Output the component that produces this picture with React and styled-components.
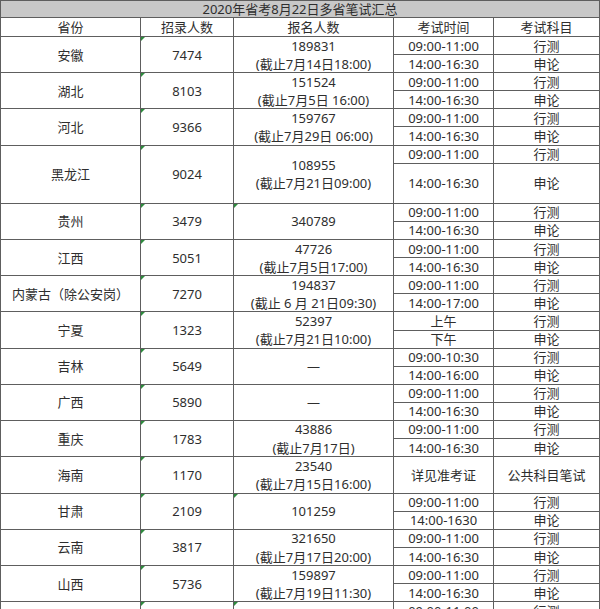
import React from "react";
import styled, { createGlobalStyle } from "styled-components";

const GlobalStyle = createGlobalStyle`
  html, body {
    margin: 0;
    padding: 0;
    background: #ffffff;
    height: 609px;
    overflow: hidden;
  }
  body {
    font-family: "Noto Sans", "Noto Sans CJK SC", sans-serif;
  }
`;

const provinces = [
  { name: "安徽", quota: "7474", reg: ["189831", "(截止7月14日18:00)"] },
  { name: "湖北", quota: "8103", reg: ["151524", "(截止7月5日 16:00)"] },
  { name: "河北", quota: "9366", reg: ["159767", "(截止7月29日 06:00)"] },
  { name: "黑龙江", quota: "9024", reg: ["108955", "(截止7月21日09:00)"], heights: [18.1, 40.2] },
  { name: "贵州", quota: "3479", reg: ["340789"], flag: true },
  { name: "江西", quota: "5051", reg: ["47726", "(截止7月5日17:00)"] },
  {
    name: "内蒙古（除公安岗）",
    quota: "7270",
    reg: ["194837", "(截止 6 月 21日09:30)"],
    slots: [
      ["09:00-11:00", "行测"],
      ["14:00-17:00", "申论"],
    ],
  },
  {
    name: "宁夏",
    quota: "1323",
    reg: ["52397", "(截止7月21日10:00)"],
    slots: [
      ["上午", "行测"],
      ["下午", "申论"],
    ],
  },
  {
    name: "吉林",
    quota: "5649",
    reg: ["—"],
    slots: [
      ["09:00-10:30", "行测"],
      ["14:00-16:00", "申论"],
    ],
  },
  { name: "广西", quota: "5890", reg: ["—"] },
  { name: "重庆", quota: "1783", reg: ["43886", "(截止7月17日)"] },
  {
    name: "海南",
    quota: "1170",
    reg: ["23540", "(截止7月15日16:00)"],
    slots: [["详见准考证", "公共科目笔试"]],
    heights: [36.6],
  },
  {
    name: "甘肃",
    quota: "2109",
    reg: ["101259"],
    flag: true,
    slots: [
      ["09:00-11:00", "行测"],
      ["14:00-1630", "申论"],
    ],
  },
  { name: "云南", quota: "3817", reg: ["321650", "(截止7月17日20:00)"] },
  { name: "山西", quota: "5736", reg: ["159897", "(截止7月19日11:30)"] },
  { name: "", quota: "", reg: [""], flag: true },
];

const defaultSlots = [
  ["09:00-11:00", "行测"],
  ["14:00-16:30", "申论"],
];

const Sheet = styled.div`
  display: grid;
  grid-template-columns: 140px 93px 160px 100px 106px;
  grid-template-rows: ${(p) => p.$rows};
  border-left: 1px solid #5e5e5e;
  border-top: 1px solid #5e5e5e;
  width: 600px;
  box-sizing: border-box;
  color: #2e2e2e;
  font-size: 13px;
`;

const Cell = styled.div`
  position: relative;
  box-sizing: border-box;
  border-right: 1px solid #5e5e5e;
  border-bottom: 1px solid #5e5e5e;
  grid-row: ${(p) => (p.$span > 1 ? `span ${p.$span}` : "auto")};
  display: flex;
  flex-direction: column;
  align-items: center;
  justify-content: center;
  line-height: 18.1px;
  white-space: nowrap;
  overflow: hidden;

  &::before {
    content: "";
    display: ${(p) => (p.$flag ? "block" : "none")};
    position: absolute;
    left: 0;
    top: 0;
    width: 0;
    height: 0;
    border-top: 4px solid #2e8b3e;
    border-right: 4px solid transparent;
  }
`;

const Title = styled(Cell)`
  grid-column: 1 / -1;
  background: #c8c8c8;
  line-height: 16px;
`;

const App = () => {
  const rowHeights = ["17px", "19px"];
  provinces.forEach((p) => {
    const slots = p.slots || defaultSlots;
    const heights = p.heights || slots.map(() => 18.1);
    heights.forEach((h) => rowHeights.push(`${h}px`));
  });

  return (
    <>
      <GlobalStyle />
      <Sheet $rows={rowHeights.join(" ")}>
        <Title>2020年省考8月22日多省笔试汇总</Title>
        <Cell>省份</Cell>
        <Cell>招录人数</Cell>
        <Cell>报名人数</Cell>
        <Cell>考试时间</Cell>
        <Cell>考试科目</Cell>
        {provinces.map((p, index) => {
          const slots = p.slots || defaultSlots;
          const span = slots.length;
          return (
            <React.Fragment key={index}>
              <Cell $span={span}>{p.name}</Cell>
              <Cell $span={span} $flag>
                {p.quota}
              </Cell>
              <Cell $span={span} $flag={p.flag}>
                {p.reg.map((line, i) => (
                  <span key={i}>{line}</span>
                ))}
              </Cell>
              {slots.map((s, i) => (
                <React.Fragment key={i}>
                  <Cell>{s[0]}</Cell>
                  <Cell>{s[1]}</Cell>
                </React.Fragment>
              ))}
            </React.Fragment>
          );
        })}
      </Sheet>
    </>
  );
};

export default App;
